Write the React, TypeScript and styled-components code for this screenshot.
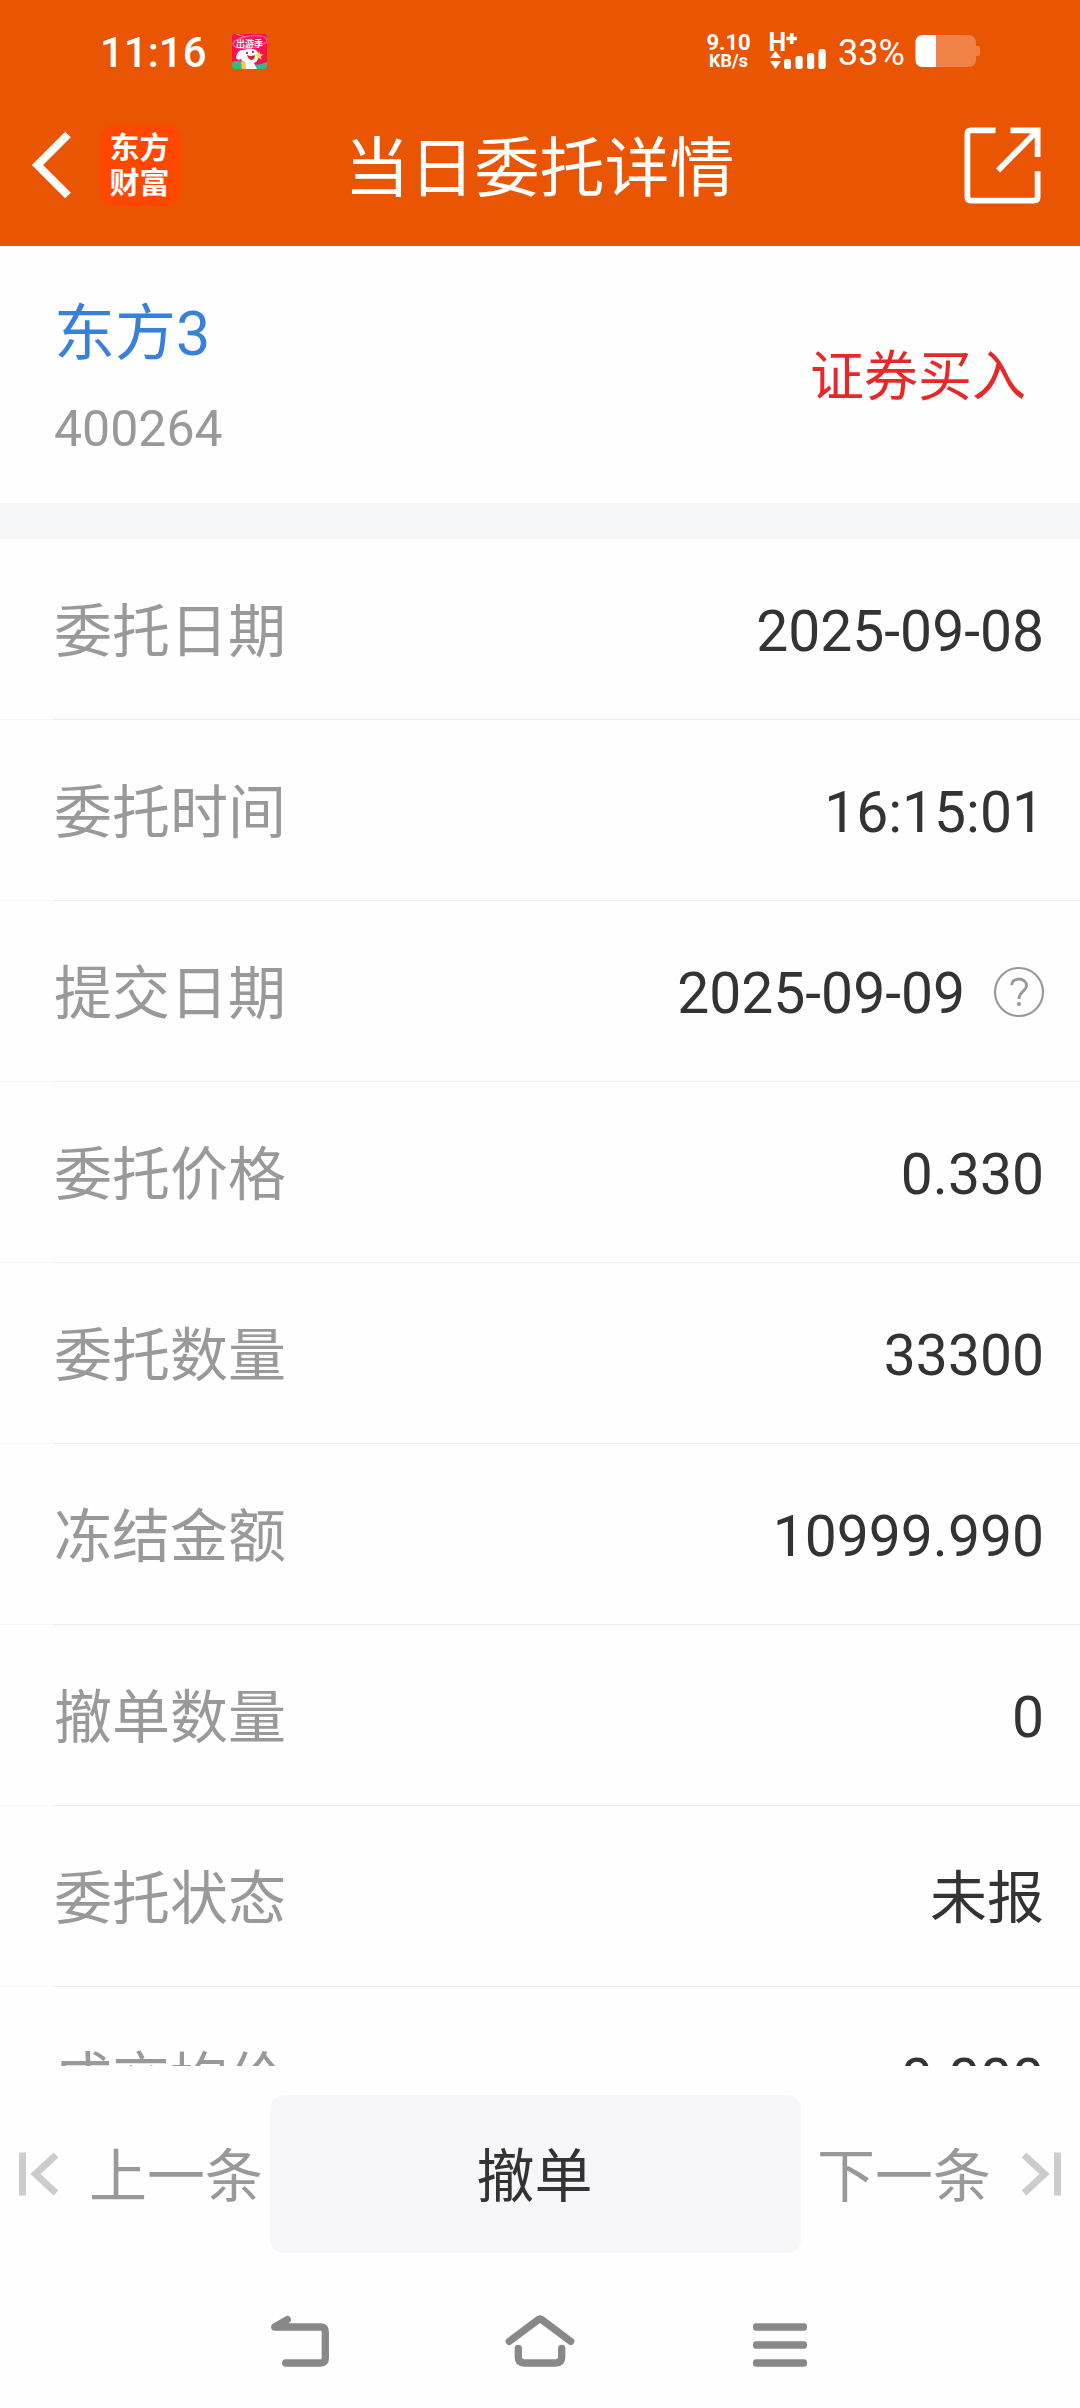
import React from "react";
import styled, { createGlobalStyle } from "styled-components";

const GlobalStyle = createGlobalStyle`
  * { box-sizing: border-box; }
  body {
    margin: 0;
    background: #fefefe;
    font-family: Roboto, "Noto Sans CJK SC", sans-serif;
  }
  button {
    border: 0;
    padding: 0;
    margin: 0;
    background: none;
    font: inherit;
    color: inherit;
  }
  svg { display: block; flex: none; overflow: visible; }
`;

const Screen = styled.div`
  display: flex;
  flex-direction: column;
  width: 1080px;
  height: 2408px;
  overflow: hidden;
  background: #fefefe;
`;

const Header = styled.header`
  flex: none;
  height: 246px;
  background: #ea5504;
  color: #fff;
`;

const StatusBar = styled.div`
  display: flex;
  align-items: center;
  justify-content: space-between;
  height: 84px;
  padding: 18px 100px 0;
`;

const StatusGroup = styled.div`
  display: flex;
  align-items: center;
`;

const Clock = styled.span`
  width: 132px;
  padding-top: 3px;
  font-size: 42px;
  line-height: 48px;
  font-weight: 500;
`;

const NetSpeed = styled.div`
  display: flex;
  flex-direction: column;
  align-items: center;
  width: 45px;
  margin-right: 19px;
  font-weight: 700;
`;

const SpeedLine = styled.span<{ $size: number; $height: number }>`
  font-size: ${(p) => p.$size}px;
  line-height: ${(p) => p.$height}px;
`;

const Percent = styled.span`
  width: 77px;
  margin-left: 12px;
  padding-top: 3px;
  font-size: 36px;
  line-height: 42px;
  white-space: nowrap;
`;

const TitleBar = styled.div`
  display: grid;
  grid-template-columns: 1fr auto 1fr;
  align-items: center;
  height: 162px;
  padding: 0 39px 0 32px;
`;

const TitleLeft = styled.div`
  display: flex;
  align-items: center;
  gap: 28px;
`;

const TitleRight = styled.div`
  display: flex;
  justify-content: flex-end;
`;

const Logo = styled.div`
  display: flex;
  flex-direction: column;
  align-items: center;
  justify-content: center;
  width: 81px;
  height: 81px;
  padding-right: 2px;
  border-radius: 15px;
  background: #ff4700;
  font-size: 30px;
  line-height: 35px;
  font-weight: 700;
`;

const Title = styled.h1`
  margin: 0;
  padding: 8px 0 0 6px;
  font-size: 65px;
  line-height: 76px;
  font-weight: 400;
`;

const Summary = styled.section`
  flex: none;
  display: flex;
  justify-content: space-between;
  height: 257px;
  padding: 50px 54px 0;
`;

const StockName = styled.div`
  font-size: 61px;
  line-height: 76px;
  color: #3880db;
`;

const StockCode = styled.div`
  margin-top: 27px;
  font-size: 50px;
  line-height: 60px;
  color: #999;
`;

const Direction = styled.div`
  padding-top: 52px;
  font-size: 54px;
  line-height: 60px;
  color: #e62828;
`;

const Divider = styled.div`
  flex: none;
  height: 36px;
  background: #f5f7f9;
`;

const List = styled.main`
  flex: none;
  height: 1527px;
  overflow: hidden;
`;

const Row = styled.div`
  display: flex;
  align-items: center;
  justify-content: space-between;
  height: 181px;
  padding: 0 36px 0 54px;
  background: linear-gradient(to right, #f7f7f7 54px, #ebebeb 54px) bottom / 100% 1px no-repeat;
`;

const Label = styled.span`
  padding-top: 4px;
  font-size: 58px;
  line-height: 70px;
  color: #999;
`;

const Value = styled.span`
  display: flex;
  align-items: center;
  gap: 29px;
  font-size: 57px;
  line-height: 70px;
  color: #333;
`;

const ValueText = styled.span`
  padding-top: 4px;
`;

const Actions = styled.footer`
  flex: none;
  display: flex;
  align-items: center;
  height: 216px;
  padding: 0 18px;
`;

const StepButton = styled.button<{ $end?: boolean }>`
  display: flex;
  align-items: center;
  justify-content: ${(p) => (p.$end ? "flex-end" : "flex-start")};
  gap: 29px;
  width: ${(p) => (p.$end ? 261 : 252)}px;
  font-size: 58px;
  line-height: 70px;
  white-space: nowrap;
  color: #999;
`;

const StepText = styled.span`
  padding-top: 6px;
`;

const CancelButton = styled.button`
  width: 531px;
  height: 158px;
  padding: 6px 2px 0 0;
  border-radius: 14px;
  background: #f7f7f9;
  font-size: 58px;
  line-height: 70px;
  color: #333;
`;

const SystemNav = styled.nav`
  display: flex;
  justify-content: center;
  align-items: center;
  gap: 168px;
  height: 126px;
`;

const PromoIcon = () => (
  <svg width="35" height="35" viewBox="0 0 35 35">
    <defs>
      <clipPath id="promo"><rect width="35" height="35" rx="3" /></clipPath>
    </defs>
    <g clipPath="url(#promo)">
      <rect width="35" height="35" fill="#ee1450" />
      <ellipse cx="18" cy="8" rx="17" ry="6" fill="none" stroke="#ff4fa0" strokeWidth="1.5" transform="rotate(-8 18 8)" />
      <path d="M4 0L14 3" stroke="#ff9a3c" strokeWidth="1.2" />
      <path d="M0 28Q8 25 16 29T35 28V35H0Z" fill="#35bb7c" />
      <path d="M4 24Q5 15 12 16Q17 13 24 16Q27 18 26 25Q25 28 22 29L25 35H11L12 28Q9 27 9 25Q6 27 4 24Z" fill="#fff" />
      <path d="M15 21Q19 23 23 21Q23 26 19 26Q16 25 15 21Z" fill="#d8203c" />
      <path d="M14 19h2M20 18h2" stroke="#3a2020" strokeWidth="1.4" />
      <path d="M27 17l1.3 3 3 .5-2.3 2 .5 3-2.5-1.5-2.5 1.5.5-3-2-2 3-.5Z" fill="#ffe04a" />
      <path d="M9 28L13 27L14 35H10Z" fill="#ffc83c" />
      <text x="17.500" y="13" textAnchor="middle" fontSize="9" fontWeight="700" fill="#fff" fontFamily="Noto Sans CJK SC">出游季</text>
    </g>
  </svg>
);

const SignalIcon = () => (
  <svg width="56" height="36" viewBox="0 0 56 36" fill="#fff">
    <text x="-1.500" y="18" fontSize="25" fontWeight="700" fontFamily="Roboto">H</text>
    <path d="M19.900 0h3.600v3.700H27v3.600h-3.500V11h-3.600V7.300h-3.500V3.700h3.500Z" />
    <path d="M5.500 18L11 25H0Z" />
    <path d="M0 28H11L5.500 36Z" />
    <rect x="14" y="26" width="7" height="10" rx="2.500" />
    <rect x="25.500" y="23" width="7.200" height="13" rx="2.500" />
    <rect x="37" y="20" width="7.200" height="16" rx="2.500" />
    <rect x="48.500" y="16" width="7.200" height="20" rx="2.500" />
  </svg>
);

const BatteryIcon = () => (
  <svg width="65" height="32" viewBox="0 0 65 32">
    <path d="M8 0H53Q61 0 61 8V11H63Q65 11 65 13V19Q65 21 63 21H61V24Q61 32 53 32H8Q0.500 32 0.500 24V8Q0.500 0 8 0Z" fill="#f08147" />
    <path d="M21 0H8Q0.500 0 0.500 8V24Q0.500 32 8 32H21Z" fill="#fff" />
  </svg>
);

const BackIcon = () => (
  <svg width="40" height="68" viewBox="0 0 40 68" fill="none" stroke="#fff" strokeWidth="8">
    <path d="M36 3.500L5.500 34L36 64.500" />
  </svg>
);

const ShareIcon = () => (
  <svg width="77" height="77" viewBox="0 0 77 77" fill="none" stroke="#fff" strokeWidth="5.800">
    <path d="M31.500 3.400H7Q3.400 3.400 3.400 7V70Q3.400 73.600 7 73.600H70Q73.600 73.600 73.600 70V44.300" />
    <path d="M46.500 3.400H73.600V30M73 4L34 43.500" />
  </svg>
);

const HelpIcon = () => (
  <svg width="50" height="50" viewBox="0 0 50 50" fill="none" stroke="#999">
    <circle cx="25" cy="25" r="24" strokeWidth="2.200" />
    <path d="M17.700 18.200C18 14 21 12 25 12C29.500 12 32.500 15 32.500 18.500C32.500 24 25 24.500 25 32" strokeWidth="2.800" />
    <circle cx="25" cy="37" r="2" fill="#999" stroke="none" />
  </svg>
);

const StepIcon = ({ next }: { next?: boolean }) => (
  <svg width="42" height="44" viewBox="0 0 42 44" fill="none" stroke="#ccc" strokeWidth="7">
    <path d={next ? "M37.500 0.500V43.500M4 3L24.500 22L4 41" : "M4.500 0.500V43.500M38 3L17.500 22L38 41"} />
  </svg>
);

const NavBack = () => (
  <svg width="72" height="60" viewBox="264 2315 72 60" fill="none" stroke="#888" strokeWidth="7.300" strokeLinecap="round" strokeLinejoin="round">
    <path d="M285.700 2363H320.500Q325.300 2363 325.300 2358V2332Q325.300 2327 320.500 2327H274.700L287.300 2319.700" />
    <path d="M276 2327L288 2320L284 2327Z" fill="#888" strokeWidth="2" />
  </svg>
);

const NavHome = () => (
  <svg width="72" height="60" viewBox="504 2315 72 60" fill="none" stroke="#888" strokeWidth="7.300" strokeLinecap="round" strokeLinejoin="round">
    <path d="M509.300 2341.300L538.500 2319.500Q540 2318.300 541.500 2319.500L570.700 2341.300" />
    <path d="M518.300 2348.500V2357Q518.300 2363 524.300 2363H555.700Q561.700 2363 561.700 2357V2348.500" />
  </svg>
);

const NavMenu = () => (
  <svg width="72" height="60" viewBox="744 2315 72 60" fill="#888">
    <rect x="753" y="2323.300" width="54" height="7.400" rx="3" />
    <rect x="753" y="2341.300" width="54" height="7.400" rx="3" />
    <rect x="753" y="2359.300" width="54" height="7.400" rx="3" />
  </svg>
);

const rows: { label: string; value: string; help?: boolean }[] = [
  { label: "委托日期", value: "2025-09-08" },
  { label: "委托时间", value: "16:15:01" },
  { label: "提交日期", value: "2025-09-09", help: true },
  { label: "委托价格", value: "0.330" },
  { label: "委托数量", value: "33300" },
  { label: "冻结金额", value: "10999.990" },
  { label: "撤单数量", value: "0" },
  { label: "委托状态", value: "未报" },
  { label: "成交均价", value: "0.000" },
];

export default function App() {
  return (
    <Screen>
      <GlobalStyle />
      <Header>
        <StatusBar>
          <StatusGroup>
            <Clock>11:16</Clock>
            <PromoIcon />
          </StatusGroup>
          <StatusGroup>
            <NetSpeed>
              <SpeedLine $size={22} $height={20}>9.10</SpeedLine>
              <SpeedLine $size={18} $height={16}>KB/s</SpeedLine>
            </NetSpeed>
            <SignalIcon />
            <Percent>33%</Percent>
            <BatteryIcon />
          </StatusGroup>
        </StatusBar>
        <TitleBar>
          <TitleLeft>
            <BackIcon />
            <Logo>
              <span>东方</span>
              <span>财富</span>
            </Logo>
          </TitleLeft>
          <Title>当日委托详情</Title>
          <TitleRight>
            <ShareIcon />
          </TitleRight>
        </TitleBar>
      </Header>
      <Summary>
        <div>
          <StockName>东方3</StockName>
          <StockCode>400264</StockCode>
        </div>
        <Direction>证券买入</Direction>
      </Summary>
      <Divider />
      <List>
        {rows.map((row) => (
          <Row key={row.label}>
            <Label>{row.label}</Label>
            <Value>
              <ValueText>{row.value}</ValueText>
              {row.help && <HelpIcon />}
            </Value>
          </Row>
        ))}
      </List>
      <Actions>
        <StepButton>
          <StepIcon />
          <StepText>上一条</StepText>
        </StepButton>
        <CancelButton>撤单</CancelButton>
        <StepButton $end>
          <StepText>下一条</StepText>
          <StepIcon next />
        </StepButton>
      </Actions>
      <SystemNav>
        <NavBack />
        <NavHome />
        <NavMenu />
      </SystemNav>
    </Screen>
  );
}
